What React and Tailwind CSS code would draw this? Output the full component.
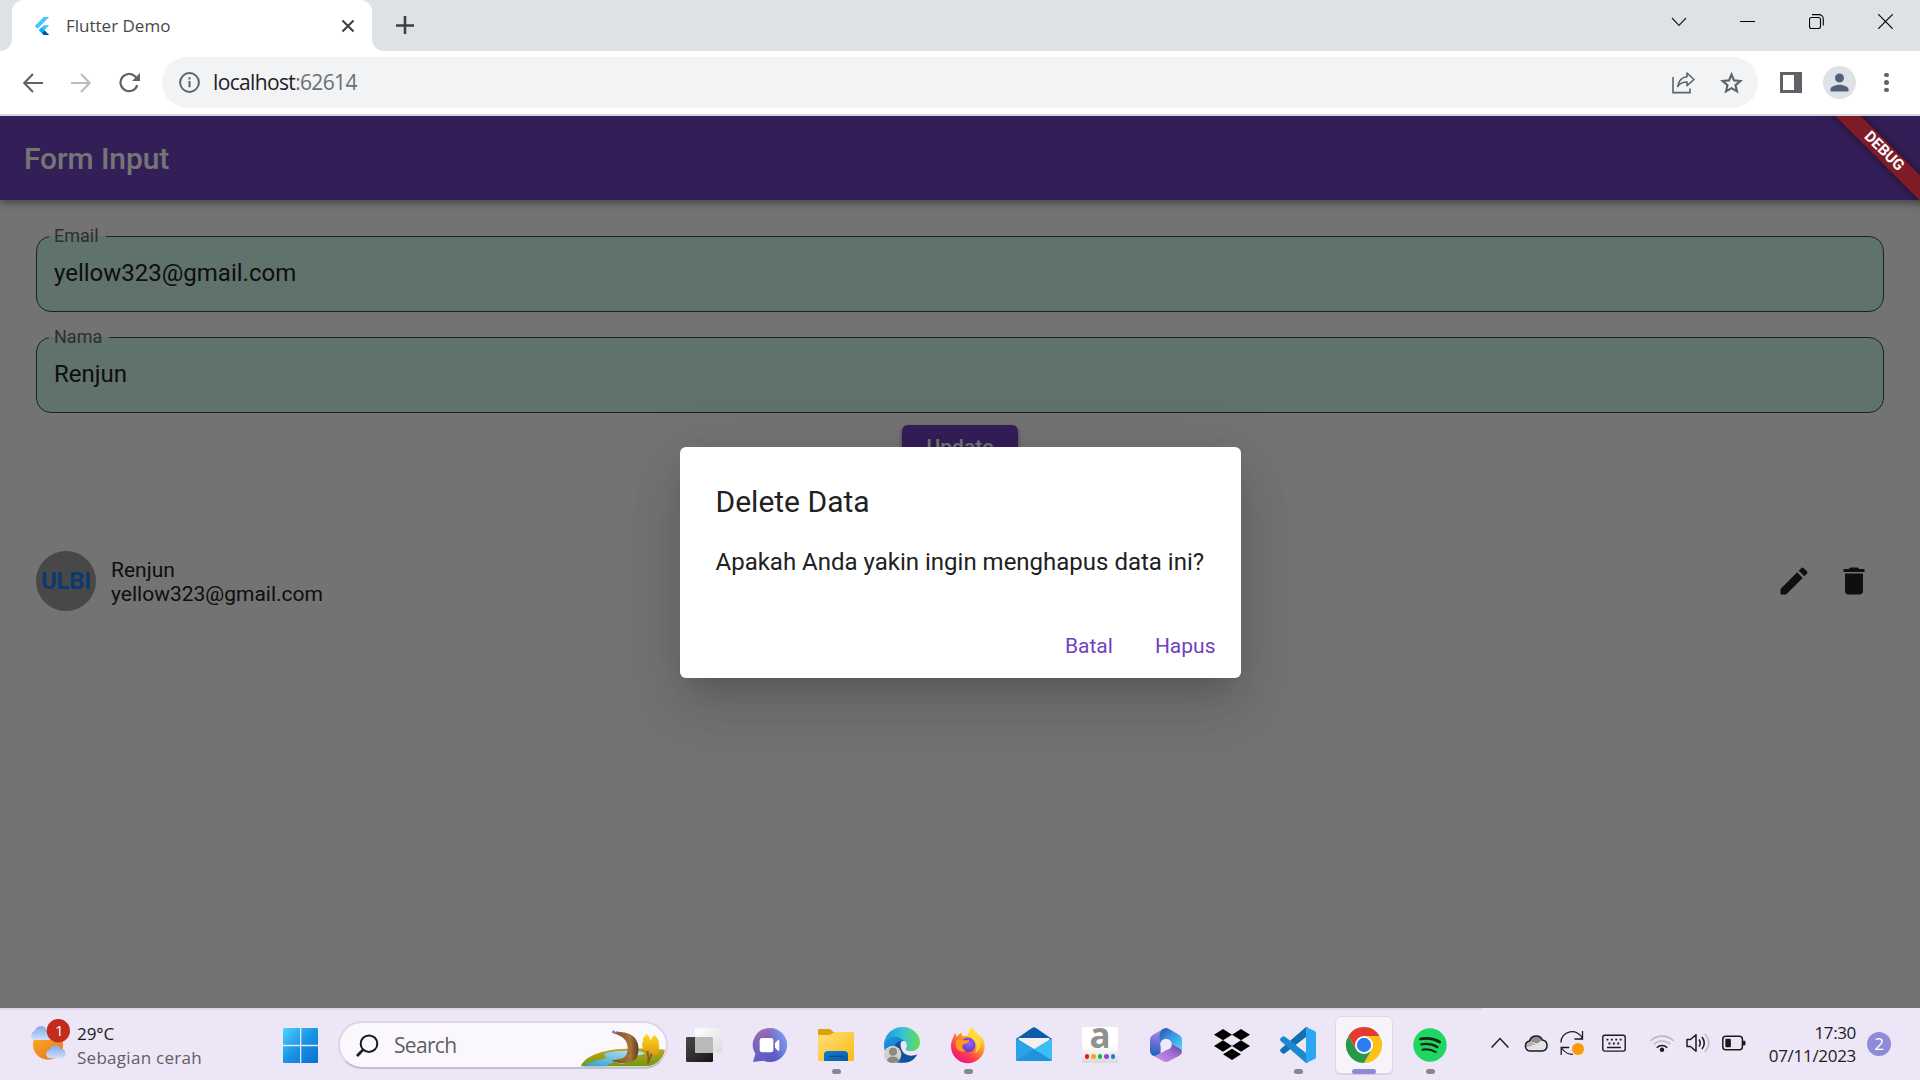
import React from "react";
import { MdEdit, MdDelete, MdPerson } from "react-icons/md";

function Favicon() {
  return (
    <svg className="h-[18px] w-[18px]" viewBox="0 0 24 24">
      <path fill="#47c5fb" d="M14.3 0 2.3 12 6 15.7 21.7 0z" />
      <path fill="#47c5fb" d="M14.3 11.07 7.86 17.53l3.7 3.7L21.7 11.07z" />
      <path fill="#00569e" d="m11.56 21.23 2.77 2.77h7.37l-6.46-6.47z" />
      <path fill="#00b5f8" d="m7.86 17.53 3.7-3.7 3.7 3.7-3.7 3.7z" />
    </svg>
  );
}

function TabStrip() {
  return (
    <div className="flex h-[51px] bg-[#dee1e6]">
      <div className="flex w-3 bg-white">
        <div className="h-full w-full rounded-br-xl bg-[#dee1e6]" />
      </div>
      <div className="bg-[#dee1e6]">
        <div className="flex h-[51px] w-[360px] items-center rounded-t-xl bg-white pl-[21px] pr-[17px]">
          <Favicon />
          <span className="ml-[15px] flex-1 text-[17px] text-[#45494d]">Flutter Demo</span>
          <svg className="h-[14px] w-[14px]" viewBox="0 0 14 14" stroke="#3c4043" strokeWidth="2.1">
            <path d="M1.5 1.5l11 11M12.5 1.5l-11 11" />
          </svg>
        </div>
      </div>
      <div className="w-3 bg-white">
        <div className="h-full w-full rounded-bl-xl bg-[#dee1e6]" />
      </div>
      <svg className="ml-3 mt-4 h-[18px] w-[18px]" viewBox="0 0 18 18" stroke="#3c4043" strokeWidth="2.6">
        <path d="M9 0v18M0 9.5h18" />
      </svg>
      <div className="ml-auto mr-[27px] mt-[14px] flex h-4 items-start">
        <svg className="mr-[53px] h-[15px] w-4" viewBox="0 0 16 15" fill="none" stroke="#222" strokeWidth="1.2">
          <path d="M1 4l7 7.3L15 4" />
        </svg>
        <svg className="mr-[54px] h-[15px] w-[15px]" viewBox="0 0 15 15" stroke="#000">
          <path d="M0 7.5h15" />
        </svg>
        <svg className="mr-[54px] h-[15px] w-[15px]" viewBox="0 0 15 15" fill="none" stroke="#000" strokeWidth="1.1">
          <rect x=".5" y="3.5" width="11" height="11" rx="2" />
          <path d="M3 .6h7a4.3 4.3 0 0 1 4.3 4.3v6.5" />
        </svg>
        <svg className="h-[15px] w-[15px]" viewBox="0 0 15 15" stroke="#000" strokeWidth="1.2">
          <path d="M.3.3l14.4 14.4M14.7.3L.3 14.7" />
        </svg>
      </div>
    </div>
  );
}

function Toolbar() {
  return (
    <div className="flex h-[65px] items-start border-b-2 border-[#d6d7da] bg-white pl-[9px] pt-[6px]">
      <div className="flex h-[51px] items-center">
        <div className="flex w-12 justify-center">
          <svg className="h-5 w-5" viewBox="0 0 20 20" fill="none" stroke="#5f6368" strokeWidth="2.1">
            <path d="M20 10H1.5M10 1L1.3 10l8.7 9" />
          </svg>
        </div>
        <div className="flex w-12 justify-center">
          <svg className="h-5 w-5" viewBox="0 0 20 20" fill="none" stroke="#babcbe" strokeWidth="2.1">
            <path d="M0 10h18.5M10 1l8.7 9-8.7 9" />
          </svg>
        </div>
        <div className="flex w-12 justify-center">
          <svg className="h-[21px] w-[21px]" viewBox="0 0 21 21" fill="none" stroke="#5f6368" strokeWidth="2.2">
            <path d="M18.3 13.2A8.6 8.6 0 1 1 16.2 4.5L18 6.4" />
            <path d="M21 1v8h-8z" fill="#5f6368" stroke="none" />
          </svg>
        </div>
      </div>
      <div className="ml-[9px] flex h-[51px] w-[1596px] items-center rounded-full bg-[#f1f3f4] pl-[17px] pr-[15px]">
        <svg className="h-[21px] w-[21px]" viewBox="0 0 21 21" fill="none" stroke="#5f6368" strokeWidth="2">
          <circle cx="10.5" cy="10.5" r="9.4" />
          <path d="M10.5 9v6.3M10.5 5.3v2.3" />
        </svg>
        <span className="ml-[13px] flex-1 text-[21px] tracking-[-0.65px] text-[#202124]">
          localhost<span className="text-[#6b6f74]">:62614</span>
        </span>
        <svg className="mr-[24px] h-[23px] w-6" viewBox="0 0 24 23" fill="none" stroke="#5f6368" strokeWidth="1.6">
          <path d="M1 6v15.6h17v-4.2" />
          <path d="M15 2l7 6.5-7 6.2V11c-4 0-7 1-9.3 4.5C6.5 10 9.5 6.3 15 5.7z" strokeLinejoin="round" />
        </svg>
        <svg className="h-[22px] w-[23px]" viewBox="0 0 23 22" fill="none" stroke="#5f6368" strokeWidth="2.1">
          <path d="M11.5 2.5l2.5 5.9 6.4.6-4.9 4.2 1.5 6.2-5.5-3.3L6 19.4l1.5-6.2L2.6 9l6.4-.6z" />
        </svg>
      </div>
      <div className="ml-[22px] flex h-[51px] items-center">
        <svg className="h-[21px] w-[22px]" viewBox="0 0 22 21">
          <path fill="#5f6368" fillRule="evenodd" d="M0 0h22v21H0zM3 3v15h11V3z" />
        </svg>
        <div className="ml-[21px] flex h-[33px] w-[33px] items-center justify-center rounded-full bg-[#dee1e6]">
          <MdPerson className="h-[27px] w-[27px] text-[#54607a]" />
        </div>
        <div className="ml-[28px] flex flex-col gap-[3px]">
          <i className="h-[4.5px] w-[4.5px] rounded-full bg-[#5f6368]" />
          <i className="h-[4.5px] w-[4.5px] rounded-full bg-[#5f6368]" />
          <i className="h-[4.5px] w-[4.5px] rounded-full bg-[#5f6368]" />
        </div>
      </div>
    </div>
  );
}

function Field({ label, value, gap }) {
  return (
    <div className="relative h-[76px] rounded-[15px] border-[1.5px] border-[#3c4a45] bg-[#d0f8ea] pl-[17px] pt-[15px]">
      <div className={`absolute left-[12px] -top-[12px] h-[22px] ${gap}`}>
        <div className="absolute top-[11px] h-[2px] w-full bg-[#d0f8ea]" />
        <div className="relative pl-[5px] text-[18px] leading-[22px] text-[#666]">{label}</div>
      </div>
      <div className="text-[24px] leading-[42px] text-[#212121]">{value}</div>
    </div>
  );
}

function FlutterPage() {
  return (
    <div className="relative h-[892px] overflow-hidden bg-[#fafafa] font-['Roboto',sans-serif]">
      <div className="relative flex h-[84px] items-center bg-[#6f42bd] pl-6 shadow-[0_3px_8px_rgba(0,0,0,0.4)]">
        <h1 className="text-[30px] font-medium tracking-[-0.1px] text-white">Form Input</h1>
      </div>
      <div className="flex flex-col px-9 pt-9">
        <Field label="Email" value="yellow323@gmail.com" gap="w-[57px]" />
        <div className="h-[25px]" />
        <Field label="Nama" value="Renjun" gap="w-[60px]" />
        <div className="mt-3 flex justify-center">
          <div className="flex h-[45px] w-[116px] items-center justify-center rounded-[6px] bg-[#6f42bd] text-[21px] font-medium text-white shadow-[0_2px_4px_rgba(0,0,0,0.4)]">
            Update
          </div>
        </div>
        <div className="mt-[81px] flex h-[60px] items-center">
          <div className="flex h-[60px] w-[60px] items-center justify-center rounded-full bg-[#9e9e9e] text-[24px] font-bold tracking-[-0.3px] text-[#1a7fee]">
            ULBI
          </div>
          <div className="ml-[15px] flex-1 pt-[2px] text-[21px] leading-[24px] text-[#212121]">
            <div>Renjun</div>
            <div>yellow323@gmail.com</div>
          </div>
          <div className="flex w-[60px] justify-center">
            <MdEdit className="h-9 w-9 text-[#212121]" />
          </div>
          <div className="flex w-[60px] justify-center">
            <MdDelete className="h-9 w-9 text-[#212121]" />
          </div>
        </div>
      </div>
      <div className="absolute inset-0 flex items-center justify-center bg-[rgba(0,0,0,0.54)]">
        <div className="flex h-[231px] w-[561px] flex-col rounded-[6px] bg-white shadow-[0_16px_23px_-10px_rgba(0,0,0,0.15),0_36px_57px_4px_rgba(0,0,0,0.07),0_14px_69px_12px_rgba(0,0,0,0.07)]">
          <h2 className="mt-9 pl-9 text-[30px] leading-[38px] text-[#212121]">Delete Data</h2>
          <p className="mt-[23px] whitespace-nowrap pl-9 text-[24px] leading-[36px] text-[#212121]">
            Apakah Anda yakin ingin menghapus data ini?
          </p>
          <div className="mt-auto flex justify-end gap-[42px] pb-[19px] pr-[25px] text-[21px] leading-[26px] text-[#6f42bd]">
            <span>Batal</span>
            <span>Hapus</span>
          </div>
        </div>
      </div>
      <div className="absolute left-[1784px] top-[27px] flex h-[18px] w-[200px] rotate-45 items-center justify-center bg-[#7f1a27] text-[15.3px] font-bold leading-none text-white shadow-[0_0_9px_rgba(0,0,0,0.5)]">
        <span className="-ml-px">DEBUG</span>
      </div>
    </div>
  );
}

function WeatherIcon() {
  return (
    <svg className="h-[44px] w-[42px]" viewBox="0 0 126 132">
      <defs>
        <linearGradient id="sun" x1="0" y1="0" x2="0.6" y2="1">
          <stop offset="0" stopColor="#f9b52c" />
          <stop offset="1" stopColor="#ef7a1a" />
        </linearGradient>
        <linearGradient id="cloud" x1="0" y1="0" x2="0" y2="1">
          <stop offset="0" stopColor="#7fa9ea" />
          <stop offset="1" stopColor="#cfe0fb" />
        </linearGradient>
      </defs>
      <circle cx="54" cy="80" r="45" fill="url(#sun)" />
      <path d="M14 66a14 14 0 0 1 0-27 19 19 0 0 1 36-3 15 15 0 0 1 10 30z" fill="url(#cloud)" />
      <path d="M58 121a13 13 0 0 1 0-25 18 18 0 0 1 34-4 15 15 0 0 1 5 29z" fill="url(#cloud)" />
      <circle cx="85" cy="38" r="35" fill="#c42b1c" />
      <text x="88" y="53" textAnchor="middle" fill="#fff" fontSize="46" fontFamily="Open Sans, sans-serif">1</text>
    </svg>
  );
}

function WindowsIcon() {
  return (
    <svg className="h-[35px] w-[35px]" viewBox="0 0 35 35">
      <defs>
        <linearGradient id="win" x1="0" y1="0" x2="1" y2="1">
          <stop offset="0" stopColor="#4cd3ff" />
          <stop offset="0.5" stopColor="#1993e6" />
          <stop offset="1" stopColor="#0571cf" />
        </linearGradient>
      </defs>
      <path fill="url(#win)" d="M1 0h16v16.7H0V1a1 1 0 0 1 1-1zM18.3 0H34a1 1 0 0 1 1 1v15.7H18.3zM0 18.2h17V35H1a1 1 0 0 1-1-1zM18.3 18.2H35V34a1 1 0 0 1-1 1H18.3z" />
    </svg>
  );
}

function SearchArt() {
  return (
    <svg className="mr-px h-[38px] w-[84px] self-end" viewBox="0 0 252 114">
      <defs>
        <linearGradient id="hill" x1="0" y1="0" x2="0" y2="1">
          <stop offset="0" stopColor="#c9a31e" />
          <stop offset="1" stopColor="#6f9a12" />
        </linearGradient>
        <linearGradient id="lake" x1="1" y1="0" x2="0" y2="1">
          <stop offset="0" stopColor="#bfe8f8" />
          <stop offset="1" stopColor="#2f9bd3" />
        </linearGradient>
        <linearGradient id="bark" x1="0" y1="0" x2="1" y2="0">
          <stop offset="0" stopColor="#6d4522" />
          <stop offset="0.7" stopColor="#a8743c" />
          <stop offset="1" stopColor="#5d3a1c" />
        </linearGradient>
        <linearGradient id="leaf" x1="0" y1="0" x2="0" y2="1">
          <stop offset="0" stopColor="#ffd91c" />
          <stop offset="1" stopColor="#e09a12" />
        </linearGradient>
      </defs>
      <path fill="url(#hill)" d="M0 112C6 88 50 64 120 60c60-3 100-2 132 2-4 26-20 42-48 50z" />
      <path fill="url(#lake)" d="M8 112c16-14 46-18 66-24 10-4-12-8 0-16 30-8 100-10 118 0-8 10-40 6-54 12-14 4-40 6-40 14-4 6-20 8-24 14z" />
      <path fill="#d9d6d0" d="M88 88c12 14 50 12 60-30 0 20 2 36-14 44-20 4-40-2-46-14z" />
      <path fill="url(#bark)" d="M94 12c30-8 60 2 70 18 12 20 10 40 2 58-6 16-60 20-76 4 36 6 50-10 50-34 0-24-14-38-46-46z" />
      <path fill="#9a5bb5" d="M94 5h8v7h-8zM106 7h6v5h-6z" />
      <path stroke="#8a5722" strokeWidth="5" fill="none" d="M201 104c3-14 0-30-4-44M203 100c4-16 10-24 12-40" />
      <path fill="url(#leaf)" d="M198 15c14 12 14 42 2 52-14-2-22-22-14-28-2-12 4-18 12-24zM220 18c14 8 18 32 12 50-4 14-18 14-24 2-4-20-2-42 12-52z" />
    </svg>
  );
}

function Icon({ children }) {
  return (
    <svg className="h-9 w-9 overflow-visible" viewBox="0 0 108 108">
      {children}
    </svg>
  );
}

const TaskView = () => (
  <Icon>
    <defs>
      <linearGradient id="tvd" x1="0" y1="0" x2="1" y2="1">
        <stop offset="0" stopColor="#484848" />
        <stop offset="1" stopColor="#161616" />
      </linearGradient>
      <linearGradient id="tvl" x1="0" y1="0" x2="1" y2="1">
        <stop offset="0" stopColor="#fff" />
        <stop offset="1" stopColor="#dcdcdc" />
      </linearGradient>
    </defs>
    <rect y="30" width="81" height="75" rx="4" fill="url(#tvd)" />
    <rect x="27" y="4" width="81" height="73" rx="3" fill="url(#tvl)" />
    <path d="M27 30h50a4 4 0 0 1 4 4v43H30a3 3 0 0 1-3-3z" fill="#b9b9b9" />
  </Icon>
);

const Chat = () => (
  <Icon>
    <defs>
      <linearGradient id="chat" x1="0.1" y1="0" x2="0.6" y2="1">
        <stop offset="0" stopColor="#b0758f" />
        <stop offset="0.3" stopColor="#7f66bd" />
        <stop offset="1" stopColor="#5658c8" />
      </linearGradient>
      <linearGradient id="chat2" x1="0" y1="0.5" x2="1" y2="0.2">
        <stop offset="0.5" stopColor="#7aa4f4" stopOpacity="0" />
        <stop offset="1" stopColor="#7aa4f4" />
      </linearGradient>
    </defs>
    <path fill="url(#chat)" d="M52 3a51 51 0 1 1-18 98l-31 4 7-24A51 51 0 0 1 52 3z" />
    <path fill="url(#chat2)" d="M52 3a51 51 0 1 1-18 98l-31 4 7-24A51 51 0 0 1 52 3z" />
    <rect x="23" y="33" width="41" height="43" rx="7" fill="#fff" />
    <path fill="#fff" d="M69 48l9-9c2-1 4-1 4 2v28c0 2-2 3-4 2l-9-9z" />
  </Icon>
);

const Explorer = () => (
  <Icon>
    <defs>
      <linearGradient id="fold" x1="0" y1="0" x2="1" y2="1">
        <stop offset="0" stopColor="#ffe07a" />
        <stop offset="1" stopColor="#fcb913" />
      </linearGradient>
      <linearGradient id="foldb" x1="0" y1="0" x2="1" y2="1">
        <stop offset="0" stopColor="#0d7fd4" />
        <stop offset="1" stopColor="#0a5aa5" />
      </linearGradient>
    </defs>
    <path fill="#dda10a" d="M0 9q0-3 3-3h30q4 0 7 3l7 7H60v14H0z" />
    <path fill="url(#fold)" d="M0 24h33q5 0 9-4 5-5 10-5h53q3 0 3 3v84H0z" />
    <path fill="url(#foldb)" d="M18 102V83q0-11 11-11h50q11 0 11 11v19z" />
    <path stroke="#08467f" strokeWidth="4" strokeLinecap="round" d="M33 88h41" />
  </Icon>
);

const Edge = () => (
  <Icon>
    <defs>
      <linearGradient id="ea" x1="0" y1="0.5" x2="1" y2="0.5">
        <stop offset="0" stopColor="#1a94d8" />
        <stop offset="0.5" stopColor="#35c1d8" />
        <stop offset="1" stopColor="#66dd55" />
      </linearGradient>
      <linearGradient id="eb" x1="0" y1="0" x2="1" y2="1">
        <stop offset="0" stopColor="#1c9be6" />
        <stop offset="1" stopColor="#0b5db3" />
      </linearGradient>
    </defs>
    <path fill="url(#eb)" d="M0 50C4 26 46 16 64 42c-14-2-22 12-12 32 8 14 30 24 46 8C88 100 72 108 54 108 20 108-2 82 0 50z" />
    <path fill="#11509a" d="M34 54c-6 30 12 54 36 52 14-3 24-12 30-24-20 10-44 2-48-18-2-12 0-16 6-22-12 0-20 2-24 12z" />
    <path fill="url(#ea)" d="M0 50C4 20 28 0 54 0c34 0 54 24 54 46 0 18-14 27-28 27-14 0-18-4-14-9 6-8 2-21-14-28C34 22 6 30 0 50z" />
    <path fill="#ede6f6" d="M52 44c8-6 16 4 14 14-1 5-4 8 0 12 10 6 26 2 34 4-2 8-20 14-34 6-14-8-20-28-14-36z" />
    <circle cx="26" cy="82" r="26" fill="#d3d0ca" />
    <circle cx="27" cy="74" r="12" fill="#8c8883" />
    <path d="M9 101c2-17 33-17 36 0-10 9-27 9-36 0z" fill="#8c8883" />
  </Icon>
);

const Firefox = () => (
  <Icon>
    <defs>
      <linearGradient id="fa" x1="0.85" y1="0.1" x2="0.25" y2="1">
        <stop offset="0" stopColor="#fff44f" />
        <stop offset="0.35" stopColor="#ffa12c" />
        <stop offset="0.7" stopColor="#ff3d4d" />
        <stop offset="1" stopColor="#e3108a" />
      </linearGradient>
      <radialGradient id="fb" cx="0.6" cy="0.4" r="0.6">
        <stop offset="0" stopColor="#9a5cff" />
        <stop offset="1" stopColor="#5b3fc0" />
      </radialGradient>
    </defs>
    <path fill="url(#fa)" d="M15 18c3 4 4 8 6 12 3-6 8-10 14-14-1 6 1 9 5 12 6-2 10-2 15-1C54 16 58 6 68 0c2 12 14 17 20 26 1 3 2 5 2 8l4-7c8 12 11 24 10 33a50 50 0 1 1-101-4C3 42 10 32 15 18z" />
    <circle cx="54" cy="54" r="22" fill="url(#fb)" />
    <path fill="#ff9a1e" d="M18 40c8-4 16-3 24 0h14c4 0 2 6-3 8-6 3-14 3-16 8-1 8 6 14 12 16-14 6-28-2-31-12-1-6-1-13 0-20z" />
    <path fill="#ffe23f" opacity="0.75" d="M55 27C55 16 58 6 68 0c2 12 14 17 20 26 12 24 0 48-14 54 14-22 0-46-19-53z" />
  </Icon>
);

const Mail = () => (
  <Icon>
    <path fill="#0d5baa" d="M0 36L48 3q6-4 12 0l48 33v20H0z" />
    <path fill="#f3f1f0" d="M8 33h92v16L54 72 8 49z" />
    <path fill="#39bff2" d="M108 34v64q0 4-5 4H54V66z" />
    <path fill="#1f93dc" d="M0 34l108 66q-1 2-5 2H4q-4 0-4-4z" />
    <path fill="#2aa4e6" d="M0 34l54 32L0 100z" />
  </Icon>
);

const Amazon = () => (
  <div className="flex h-9 w-9 flex-col items-center bg-gradient-to-b from-white from-50% to-[#d9d9d9]">
    <span className="-mt-[13px] h-[40px] text-[35px] font-bold leading-[42px] text-[#919191]">a</span>
    <span className="flex gap-[2px]">
      <i className="h-[4.5px] w-[4.5px] rounded-full bg-[#ee1111]" />
      <i className="h-[4.5px] w-[4.5px] rounded-full bg-[#f7a11a]" />
      <i className="h-[4.5px] w-[4.5px] rounded-full bg-[#1faf5a]" />
      <i className="h-[4.5px] w-[4.5px] rounded-full bg-[#9b3fd0]" />
      <i className="h-[4.5px] w-[4.5px] rounded-full bg-[#0d86e3]" />
    </span>
  </div>
);

const Office = () => (
  <Icon>
    <defs>
      <linearGradient id="oa" x1="0.3" y1="0" x2="0.2" y2="1">
        <stop offset="0" stopColor="#b78ae0" />
        <stop offset="0.5" stopColor="#6a6fd6" />
        <stop offset="1" stopColor="#1269b8" />
      </linearGradient>
      <linearGradient id="ob" x1="0" y1="0" x2="1" y2="1">
        <stop offset="0" stopColor="#2a4fa8" />
        <stop offset="0.4" stopColor="#3a8fe0" />
        <stop offset="1" stopColor="#4fe0f8" />
      </linearGradient>
      <linearGradient id="oc" x1="0" y1="1" x2="1" y2="0">
        <stop offset="0" stopColor="#cf9af2" />
        <stop offset="0.6" stopColor="#a06ad0" />
        <stop offset="1" stopColor="#5a3a8c" />
      </linearGradient>
    </defs>
    <path fill="url(#oa)" d="M46 5L14 24Q6 29 6 38v34q0 8 6 13 8 4 16 0l10-7V50q0-8 8-13z" />
    <path fill="url(#ob)" d="M46 5q8-4 16 0l32 19q8 5 8 14v38q-2-8-8-12L70 50 54 36q-10 4-16 14-6-20-3-30 3-10 11-15z" />
    <path fill="url(#oc)" d="M12 85q8 4 16 0l26-15 16-10V50l24 14q8 4 8 12-2 6-8 10l-32 17q-8 4-16 0z" />
    <circle cx="54" cy="52" r="17" fill="#efe9f8" />
  </Icon>
);

const Dropbox = () => (
  <Icon>
    <path d="M27 6l27 17-27 17L0 23zM81 6l27 17-27 17-27-17zM27 40l27 17-27 17L0 57zM81 40l27 17-27 17-27-17zM54 65l27 17-27 17-27-17z" />
  </Icon>
);

const VsCode = () => (
  <Icon>
    <path fill="#1070b3" d="M78 0v30L15 79q-4 3-8 0l-5-5q-4-4 0-8z" />
    <path fill="#1b88cf" d="M78 108V78L15 29q-4-3-8 0l-5 5q-4 4 0 8z" />
    <path fill="#2aa8f2" d="M78 0l25 11q5 2 5 8v70q0 6-5 8l-25 11q3-2 3-6V6q0-4-3-6z" />
    <path fill="#2aa8f2" d="M78 0h6v108h-6z" />
  </Icon>
);

const Chrome = () => (
  <Icon>
    <path fill="#e33b2e" d="M7.2 27A54 54 0 0 1 100.8 27H54L30.6 67.5z" />
    <path fill="#fbc116" d="M100.8 27A54 54 0 0 1 54 108l23.4-40.5L54 27z" />
    <path fill="#2a9748" d="M7.2 27A54 54 0 0 0 54 108l23.4-40.5H30.6z" />
    <circle cx="54" cy="54" r="27" fill="#fff" />
    <circle cx="54" cy="54" r="21.5" fill="#2f7bf0" />
  </Icon>
);

const Spotify = () => (
  <Icon>
    <circle cx="54" cy="54" r="50" fill="#1ed760" />
    <g fill="none" stroke="#14221a" strokeLinecap="round">
      <path strokeWidth="8" d="M25 36q32-6 58 9" />
      <path strokeWidth="7" d="M28 52q27-5 48 8" />
      <path strokeWidth="6" d="M31 68q22-4 40 7" />
    </g>
  </Icon>
);

const APPS = [
  { I: TaskView },
  { I: Chat },
  { I: Explorer, open: true },
  { I: Edge },
  { I: Firefox, open: true },
  { I: Mail },
  { I: Amazon },
  { I: Office },
  { I: Dropbox },
  { I: VsCode, open: true },
  { I: Chrome, active: true },
  { I: Spotify, open: true },
];

function AppSlot({ I, open, active }) {
  return (
    <div className="flex h-full w-[66px] justify-center pt-[8px]">
      <div
        className={
          active
            ? "flex h-[58px] w-[58px] flex-col items-center rounded-[6px] border border-[#e0dae9] bg-[#f6f3fa] pt-[10px] shadow-[0_1px_0_#d5cfdd]"
            : "flex h-[58px] w-[58px] flex-col items-center pt-[11px]"
        }
      >
        <I />
        {open && <div className="mt-[6px] h-[5px] w-[9px] shrink-0 rounded-full bg-[#89868f]" />}
        {active && <div className="mt-[6px] h-[5px] w-6 shrink-0 rounded-full bg-[#8f8ad8]" />}
      </div>
    </div>
  );
}

function Tray() {
  return (
    <div className="flex h-[72px] items-center pb-[2px]">
      <svg className="h-[24px] w-[18px]" viewBox="0 0 18 24" fill="none" stroke="#1b1b1b" strokeWidth="1.5">
        <path d="M.6 16.5L9 7.5l8.4 9" />
      </svg>
      <svg className="ml-[15px] h-6 w-6" viewBox="0 0 24 24">
        <path fill="#e3e3e3" d="M6 20A5 5 0 0 1 5.500 10.100a7 7 0 0 1 13-1.100 5.600 5.600 0 0 1 0 11z" />
        <path fill="#8d8d8d" d="M5.500 10.100a7 7 0 0 1 13-1.100L13 12.500z" />
        <path fill="#b3b3b3" d="M1.500 16.500A5 5 0 0 1 5.500 10.100L12 13.500z" />
        <path fill="none" stroke="#1b1b1b" strokeWidth="1.5" d="M6 20A5 5 0 0 1 5.500 10.100a7 7 0 0 1 13-1.100 5.600 5.600 0 0 1 0 11z" />
      </svg>
      <svg className="ml-3 h-6 w-6" viewBox="0 0 24 24" fill="none" stroke="#1b1b1b" strokeWidth="1.3">
        <path d="M1 11.5A11 10.5 0 0 1 22.3 7.5M22.5 0v8h-8M1.2 24v-7.5h8M2 17.5q4 6 11 5.8" />
        <circle cx="18" cy="18" r="6" fill="#ff9900" stroke="none" />
      </svg>
      <svg className="ml-[18px] h-6 w-6" viewBox="0 0 24 24" fill="none" stroke="#1b1b1b" strokeWidth="1.4">
        <rect x=".8" y="4.3" width="22.4" height="15.8" rx="2" />
        <path strokeWidth="1.8" strokeDasharray="1.9 2.5" d="M4.5 8.7h16M6.5 12.5h12" />
        <path strokeWidth="1.5" d="M5 16.500h14" />
      </svg>
      <svg className="ml-6 h-6 w-6" viewBox="0 0 24 24" fill="none" strokeWidth="1.6">
        <path stroke="#bcb6c6" d="M.5 10a16 16 0 0 1 23 0M3.8 13.5a11.5 11.5 0 0 1 16.4 0" />
        <path stroke="#1b1b1b" d="M6.8 16.7a7.3 7.3 0 0 1 10.4 0" />
        <circle cx="12" cy="18.8" r="2.2" fill="#1b1b1b" />
      </svg>
      <svg className="ml-3 h-6 w-6" viewBox="0 0 24 24" fill="none" stroke="#1b1b1b" strokeWidth="1.5">
        <path strokeLinejoin="round" d="M1 8.500h3.500L10 3.800v16.400l-5.500-4.700H1z" />
        <path d="M13 8.500q2.500 3.500 0 7M16 6q4.500 6 0 12" />
        <path stroke="#bcb6c6" d="M18.800 3q8 9 0 18" />
      </svg>
      <svg className="ml-3 h-6 w-6" viewBox="0 0 24 24" fill="none" stroke="#1b1b1b" strokeWidth="1.5">
        <rect x=".8" y="5.2" width="19.6" height="13.6" rx="3" />
        <rect x="3.3" y="7.8" width="5.6" height="8.4" rx="1" fill="#1b1b1b" stroke="none" />
        <path strokeWidth="3" strokeLinecap="round" d="M22 11v2" />
      </svg>
    </div>
  );
}

function Taskbar() {
  return (
    <div className="relative flex h-[72px] bg-[#ede6f6] text-[#1b1b1b]">
      <div className="absolute left-0 top-0 h-[2px] w-[1482px] bg-[#ddd6e6]" />
      <div className="flex w-[283px] pl-[30px] pt-[10px]">
        <WeatherIcon />
        <div className="ml-[5px] mt-[4px] text-[17px] leading-[23.500px]">
          <div className="tracking-[-0.05px]">29°C</div>
          <div className="whitespace-nowrap tracking-[0.28px] text-[#605d66]">Sebagian cerah</div>
        </div>
      </div>
      <div className="pt-5">
        <WindowsIcon />
      </div>
      <div className="ml-5 mt-[13px] flex h-12 w-[330px] items-center overflow-hidden rounded-full border-2 border-[#dcd6e6] border-b-[#c4bfce] bg-[#faf8fd] pl-4">
        <svg className="h-[23px] w-[23px]" viewBox="0 0 23 23" fill="none" stroke="#1b1b1b" strokeWidth="2">
          <circle cx="13" cy="9.7" r="8.3" />
          <path strokeWidth="2.8" d="M7.2 15.6L1 22" />
        </svg>
        <span className="ml-[15px] flex-1 pt-[2px] text-[21px] tracking-[-0.68px] text-[#605d66]">Search</span>
        <SearchArt />
      </div>
      <div className="ml-[3px] flex h-[72px]">
        {APPS.map((a, i) => (
          <AppSlot key={i} {...a} />
        ))}
      </div>
      <div className="ml-auto flex">
        <Tray />
        <div className="ml-[11px] w-[99px] pt-[13px] text-right text-[17px] leading-[23px]">
          <div className="tracking-[-0.35px]">17:30</div>
          <div className="tracking-[-0.3px]">07/11/2023</div>
        </div>
        <div className="ml-[11px] mr-[29px] mt-6 flex h-6 w-6 items-center justify-center rounded-full bg-[#8f8bd8] text-[17px] text-white">
          2
        </div>
      </div>
    </div>
  );
}

export default function App() {
  return (
    <div className="flex h-[1080px] w-[1920px] flex-col overflow-hidden font-['Open_Sans',sans-serif]">
      <TabStrip />
      <Toolbar />
      <FlutterPage />
      <Taskbar />
    </div>
  );
}
